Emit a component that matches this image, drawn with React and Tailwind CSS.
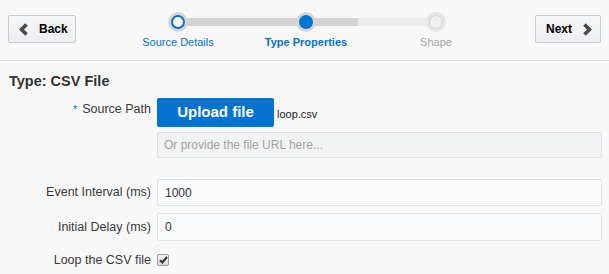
import { useState } from "react";

function Chevron({ dir }) {
  const d = dir === "left" ? "M7.5 1.5 2.5 6.5l5 5" : "M1.5 1.5l5 5-5 5";
  return (
    <svg width="9" height="13" viewBox="0 0 9 13" className="shrink-0">
      <path d={d} fill="none" stroke="#4a4a4a" strokeWidth="3.6" strokeLinejoin="miter" />
    </svg>
  );
}

function Step({ state, label, width }) {
  let outer = "bg-[#d6d6d6]";
  let inner = "bg-white border-2 border-[#0572ce]";
  let text = "text-[#0572ce]";
  if (state === "current") {
    inner = "bg-[#0572ce]";
    text = "text-[#0572ce] font-bold";
  }
  if (state === "todo") {
    outer = "bg-[#e6e6e6]";
    inner = "bg-[#eef0f2] border border-[#cfd4da]";
    text = "text-[#a6a6a6]";
  }
  return (
    <div className={`flex flex-col items-center ${width}`}>
      <div className={`w-[20px] h-[20px] rounded-full flex items-center justify-center relative z-10 ${outer}`}>
        <div className={`w-[14px] h-[14px] rounded-full ${inner}`}></div>
      </div>
      <div className={`mt-[4px] text-[11px] leading-[13px] whitespace-nowrap ${text}`}>{label}</div>
    </div>
  );
}

export default function App() {
  const [loop, setLoop] = useState(true);

  return (
    <div
      className="w-[609px] h-[274px] bg-[#f8f8f8] overflow-hidden text-[#333]"
      style={{ fontFamily: '"Liberation Sans", Arial, sans-serif' }}
    >
      <div className="h-[61px] border-b border-[#d9dfe6] flex items-start px-[8px]">
        <button className="mt-[15px] w-[68px] h-[28px] flex items-center gap-[11px] pl-[10px] rounded-[2px] border border-[#c4ccd4] bg-gradient-to-b from-[#f6f7f8] to-[#eceef1] text-[12px] font-bold text-black">
          <Chevron dir="left" />
          Back
        </button>
        <div className="relative mt-[12px] ml-[64px] w-[330px] flex">
          <div className="absolute left-[38px] right-[34px] top-[6px] h-[8px] flex">
            <div className="w-[180px] bg-[#d3d3d3]"></div>
            <div className="flex-1 bg-[#ebebeb]"></div>
          </div>
          <Step state="done" label="Source Details" width="w-[76px]" />
          <Step state="current" label="Type Properties" width="w-[100px] ml-[40px]" />
          <Step state="todo" label="Shape" width="w-[50px] ml-[55px]" />
        </div>
        <button className="ml-auto mt-[15px] w-[66px] h-[28px] flex items-center gap-[11px] pl-[10px] rounded-[2px] border border-[#c4ccd4] bg-gradient-to-b from-[#f6f7f8] to-[#eceef1] text-[12px] font-bold text-black">
          Next
          <Chevron dir="right" />
        </button>
      </div>

      <div className="pt-[12px] pl-[9px] pr-[7px]">
        <div className="text-[14.5px] leading-[16px] font-bold text-[#333]">Type: CSV File</div>

        <div className="grid grid-cols-[142px_1fr] gap-x-[6px] mt-[9px] text-[12.5px] text-[#3a3a3a]">
          <div className="text-right pt-[4px] leading-[14px]">
            <span className="text-[#0572ce] text-[11px] align-top mr-[5px]">*</span>
            Source Path
          </div>
          <div>
            <div className="flex items-center">
              <button className="w-[117px] h-[29px] bg-[#0572ce] rounded-[2px] text-white text-[15px] font-bold">
                Upload file
              </button>
              <span className="ml-[3px] mt-[4px] text-[11px] text-[#222]">loop.csv</span>
            </div>
            <input
              className="mt-[5px] w-full h-[26px] bg-[#f1f3f6] border border-[#dce1e7] rounded-[2px] px-[6px] text-[12px] placeholder:text-[#a3a3a3] outline-none"
              placeholder="Or provide the file URL here..."
            />
          </div>

          <div className="mt-[21px] h-[27px] flex items-center justify-end">Event Interval (ms)</div>
          <input
            className="mt-[21px] h-[27px] w-full bg-[#fbfcfd] border border-[#dde2e8] rounded-[2px] px-[7px] text-[12px] text-[#333] outline-none"
            defaultValue="1000"
          />

          <div className="mt-[7px] h-[28px] flex items-center justify-end">Initial Delay (ms)</div>
          <input
            className="mt-[7px] h-[28px] w-full bg-[#fbfcfd] border border-[#dde2e8] rounded-[2px] px-[7px] text-[12px] text-[#333] outline-none"
            defaultValue="0"
          />

          <div className="mt-[11px] h-[16px] flex items-center justify-end">Loop the CSV file</div>
          <div className="mt-[11px] h-[16px] flex items-center">
            <button
              onClick={() => setLoop(!loop)}
              className="w-[12px] h-[12px] rounded-[2px] border border-[#9a9a9a] bg-gradient-to-b from-[#f4f4f4] to-[#dcdcdc] flex items-center justify-center"
            >
              {loop && (
                <svg width="9" height="8" viewBox="0 0 9 8">
                  <path d="M1 4.2 3.3 6.5 8 1" fill="none" stroke="#333" strokeWidth="2" />
                </svg>
              )}
            </button>
          </div>
        </div>
      </div>
    </div>
  );
}
